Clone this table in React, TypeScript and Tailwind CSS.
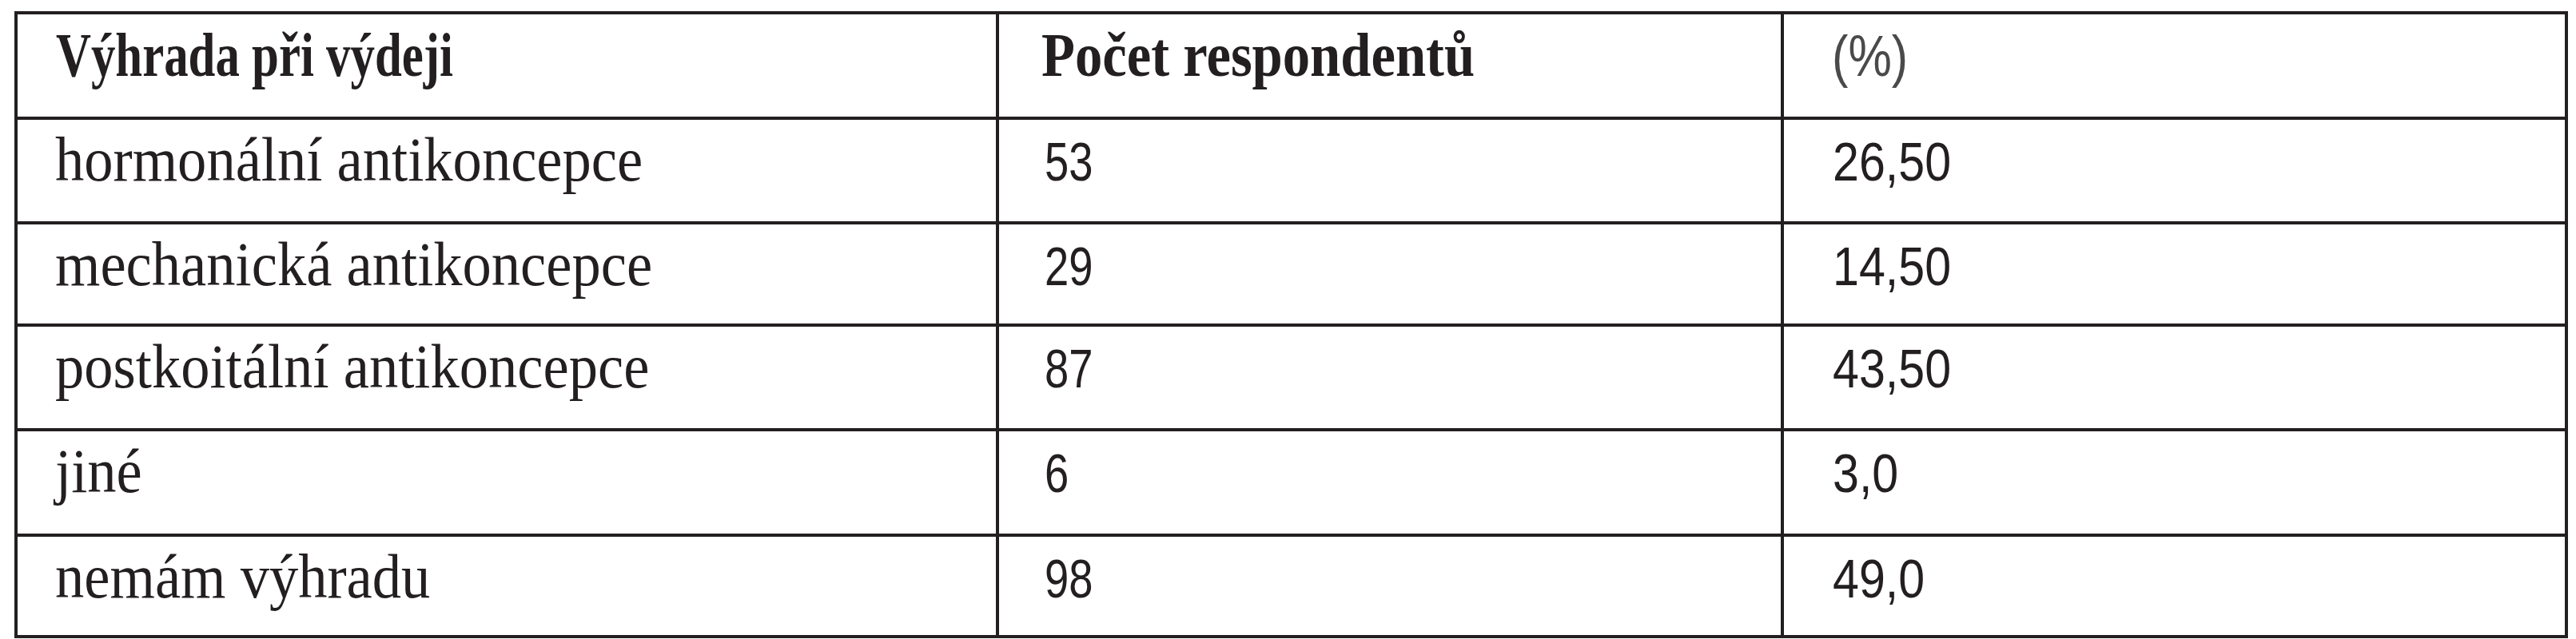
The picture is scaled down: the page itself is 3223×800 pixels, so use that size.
import React from "react";

const rows: [string, string, string][] = [
  ["hormonální antikoncepce", "53", "26,50"],
  ["mechanická antikoncepce", "29", "14,50"],
  ["postkoitální antikoncepce", "87", "43,50"],
  ["jiné", "6", "3,0"],
  ["nemám výhradu", "98", "49,0"],
];

const rowHeights = ["h-[131px]", "h-[128px]", "h-[131px]", "h-[132px]", "h-[127px]"];

export default function App() {
  return (
    <div className="w-[3223px] h-[800px] bg-white overflow-hidden pl-[18px] pt-[14px] text-[#231f20]">
      <table className="table-fixed border-separate border-spacing-0 w-[3195px]">
        <colgroup>
          <col className="w-[1232px]" />
          <col className="w-[982px]" />
          <col className="w-[981px]" />
        </colgroup>
        <thead>
          <tr className="h-[136px]">
            <th className="align-baseline text-left font-normal border-t-4 border-l-4 border-r-4 border-b-4 border-[#231f20] pl-[48px] pt-[12px] leading-[78px] text-[78px] [font-family:'Liberation_Serif',serif]">
              <span className="inline-block origin-left scale-x-[0.78] font-bold whitespace-nowrap">Výhrada při výdeji</span>
            </th>
            <th className="align-baseline text-left font-normal border-t-4 border-r-4 border-b-4 border-[#231f20] pl-[53px] pt-[12px] leading-[78px] text-[78px] [font-family:'Liberation_Serif',serif]">
              <span className="inline-block origin-left scale-x-[0.88] font-bold whitespace-nowrap">Počet respondentů</span>
            </th>
            <th className="align-baseline text-left font-normal border-t-4 border-r-4 border-b-4 border-[#231f20] pl-[60px] pt-[12px] leading-[78px] text-[72px] [font-family:'Liberation_Sans',sans-serif]">
              <span className="inline-block origin-left scale-x-[0.85] whitespace-nowrap text-[#4a4a4a]">(%)</span>
            </th>
          </tr>
        </thead>
        <tbody>
          {rows.map((r, i) => (
            <tr key={i} className={rowHeights[i]}>
              <td className="align-baseline border-l-4 border-r-4 border-b-4 border-[#231f20] pl-[47px] pt-[11px] leading-[78px] text-[78px] [font-family:'Liberation_Serif',serif]">
                <span className="inline-block origin-left scale-x-[0.93] whitespace-nowrap">{r[0]}</span>
              </td>
              <td className="align-baseline border-r-4 border-b-4 border-[#231f20] pl-[57px] pt-[11px] leading-[78px] text-[68px] [font-family:'Liberation_Sans',sans-serif]">
                <span className="inline-block origin-left scale-x-[0.8] whitespace-nowrap">{r[1]}</span>
              </td>
              <td className="align-baseline border-r-4 border-b-4 border-[#231f20] pl-[61px] pt-[11px] leading-[78px] text-[68px] [font-family:'Liberation_Sans',sans-serif]">
                <span className="inline-block origin-left scale-x-[0.87] whitespace-nowrap">{r[2]}</span>
              </td>
            </tr>
          ))}
        </tbody>
      </table>
    </div>
  );
}
